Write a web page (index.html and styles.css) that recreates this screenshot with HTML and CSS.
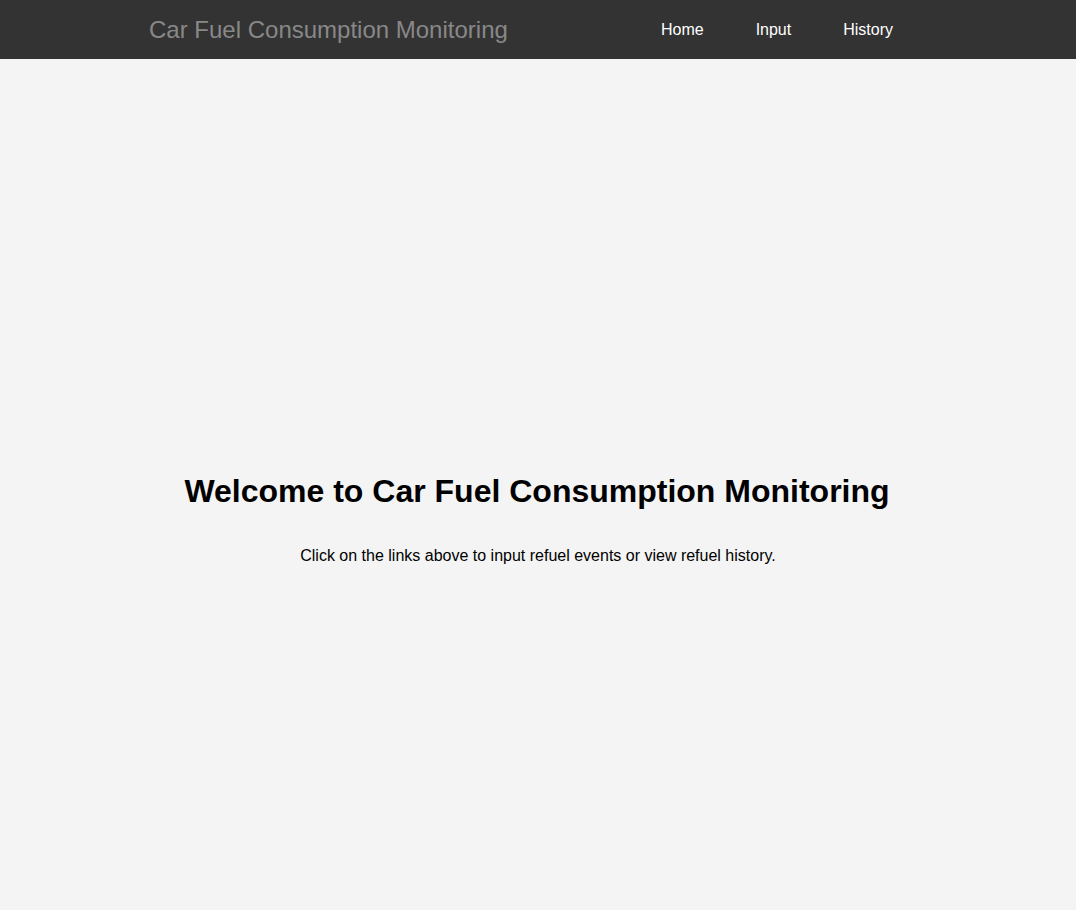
FILE: index.html
```html
<!DOCTYPE html>
<html lang="en">
<head>
<meta charset="utf-8">
<title>Car Fuel Consumption Monitoring</title>
<link rel="stylesheet" href="styles.css">
</head>
<body>
<header class="site-header">
  <div class="brand">Car Fuel Consumption Monitoring</div>
  <nav class="nav">
    <a href="#" class="nav-link">Home</a>
    <a href="#" class="nav-link">Input</a>
    <a href="#" class="nav-link">History</a>
  </nav>
</header>
<main class="main">
  <h1 class="title">Welcome to Car Fuel Consumption Monitoring</h1>
  <p class="lead">Click on the links above to input refuel events or view refuel history.</p>
</main>
</body>
</html>
```
FILE: styles.css
```css
html, body {
  margin: 0;
  padding: 0;
}
body {
  font-family: "Liberation Sans", Arial, sans-serif;
  background: #f4f4f4;
  color: #000;
}
.site-header {
  background: #333;
  height: 59px;
  display: flex;
  align-items: center;
  justify-content: space-between;
  padding: 0 183px 0 149px;
}
.brand {
  color: #888;
  font-size: 24px;
  padding-top: 1px;
}
.nav {
  display: flex;
  gap: 52px;
}
.nav-link {
  color: #fff;
  text-decoration: none;
  font-size: 16px;
}
.main {
  min-height: 100vh;
  padding-top: 2px;
  display: flex;
  flex-direction: column;
  align-items: center;
  justify-content: center;
  text-align: center;
}
.title {
  font-size: 32px;
  font-weight: bold;
  margin: 21.44px 0;
  padding-right: 2px;
}
.lead {
  font-size: 16px;
  margin: 16px 0;
}
```
